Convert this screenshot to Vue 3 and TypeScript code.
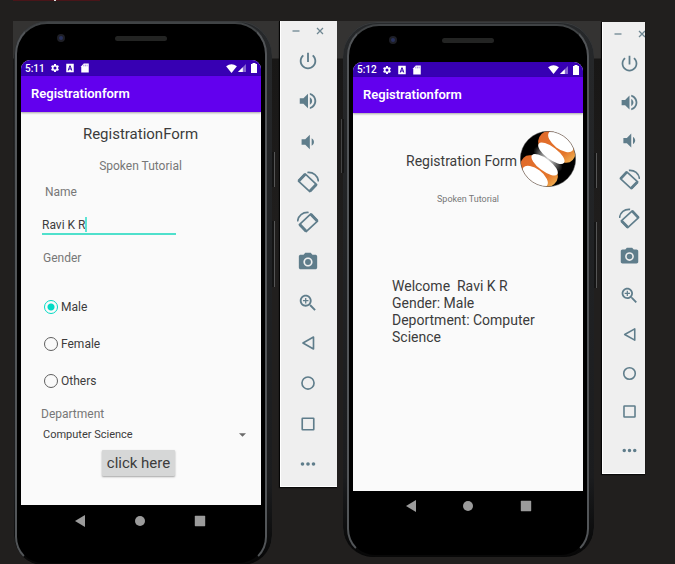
<script setup lang="ts">
import { ref } from 'vue'

interface Tool {
  label: string
  fill?: string
  ends?: string
  line?: string
  flip?: boolean
}

const rotateEnds = 'M1.9 11 8.9 3.6M14 22 21 14.8'
const rotateLine = 'M1.6 11 8.9 3.2 21.4 14.8 14 22.4ZM11.3 1.6C17.8 1 22.8 5.2 23.4 11.4'

const tools: Tool[] = [
  { label: 'Power', fill: 'M13 3h-2v10h2V3zm4.83 2.17l-1.42 1.42C17.99 7.86 19 9.81 19 12c0 3.87-3.13 7-7 7s-7-3.13-7-7c0-2.19 1.01-4.14 2.58-5.42L6.17 5.17C4.23 6.82 3 9.26 3 12c0 4.97 4.03 9 9 9s9-4.03 9-9c0-2.74-1.23-5.18-3.17-6.83z' },
  { label: 'Volume up', fill: 'M3 9v6h4l5 5V4L7 9H3zm13.5 3c0-1.77-1.02-3.29-2.5-4.03v8.05c1.48-.73 2.5-2.25 2.5-4.02zM14 3.23v2.06c2.89.86 5 3.54 5 6.71s-2.11 5.85-5 6.71v2.06c4.01-.91 7-4.49 7-8.77s-2.99-7.86-7-8.77z' },
  { label: 'Volume down', fill: 'M18.5 12c0-1.77-1.02-3.29-2.5-4.03v8.05c1.48-.73 2.5-2.25 2.5-4.02zM5 9v6h4l5 5V4L9 9H5z' },
  { label: 'Rotate left', ends: rotateEnds, line: rotateLine },
  { label: 'Rotate right', ends: rotateEnds, line: rotateLine, flip: true },
  { label: 'Take screenshot', fill: 'M12 8.8a3.2 3.2 0 1 0 0 6.4 3.2 3.2 0 0 0 0-6.4zM9 2L7.17 4H4c-1.1 0-2 .9-2 2v12c0 1.1.9 2 2 2h16c1.1 0 2-.9 2-2V6c0-1.1-.9-2-2-2h-3.17L15 2H9zm3 15c-2.76 0-5-2.24-5-5s2.24-5 5-5 5 2.24 5 5-2.24 5-5 5z' },
  { label: 'Zoom', fill: 'M15.5 14h-.79l-.28-.27C15.41 12.59 16 11.11 16 9.5 16 5.91 13.09 3 9.5 3S3 5.91 3 9.5 5.91 16 9.5 16c1.61 0 3.09-.59 4.23-1.57l.27.28v.79l5 4.99L20.49 19l-4.99-5zm-6 0C7.01 14 5 11.99 5 9.5S7.01 5 9.5 5 14 7.01 14 9.5 11.99 14 9.5 14zM10.2 6.5H8.8v2.3H6.5v1.4h2.3v2.3h1.4v-2.3h2.3V8.8h-2.3z' },
  { label: 'Back', line: 'M18 5.5V18.5L6.5 12Z' },
  { label: 'Home', line: 'M12 5.4a6.6 6.6 0 1 0 0 13.2 6.6 6.6 0 0 0 0-13.2Z' },
  { label: 'Overview', line: 'M6.2 5.7H17.8Q18.3 5.7 18.3 6.2V17.8Q18.3 18.3 17.8 18.3H6.2Q5.7 18.3 5.7 17.8V6.2Q5.7 5.7 6.2 5.7Z' },
  { label: 'More', fill: 'M6 10a2 2 0 1 0 0 4 2 2 0 0 0 0-4zm6 0a2 2 0 1 0 0 4 2 2 0 0 0 0-4zm6 0a2 2 0 1 0 0 4 2 2 0 0 0 0-4z' },
]

const gear = 'M19.14 12.94c.04-.3.06-.61.06-.94 0-.32-.02-.64-.07-.94l2.03-1.58c.18-.14.23-.41.12-.61l-1.92-3.32c-.12-.22-.37-.29-.59-.22l-2.39.96c-.5-.38-1.03-.7-1.62-.94l-.36-2.54c-.04-.24-.24-.41-.48-.41h-3.84c-.24 0-.43.17-.47.41l-.36 2.54c-.59.24-1.13.57-1.62.94l-2.39-.96c-.22-.08-.47 0-.59.22L2.74 8.87c-.12.21-.08.47.12.61l2.03 1.58c-.05.3-.09.63-.09.94s.02.64.07.94l-2.03 1.58c-.18.14-.23.41-.12.61l1.92 3.32c.12.22.37.29.59.22l2.39-.96c.5.38 1.03.7 1.62.94l.36 2.54c.05.24.24.41.48.41h3.84c.24 0 .44-.17.47-.41l.36-2.54c.59-.24 1.13-.56 1.62-.94l2.39.96c.22.08.47 0 .59-.22l1.92-3.32c.12-.22.07-.47-.12-.61l-2.01-1.58zM12 15.6A3.6 3.6 0 1 1 12 8.4a3.6 3.6 0 0 1 0 7.2z'

const devices = [
  { id: 'form', time: '5:11' },
  { id: 'result', time: '5:12' },
]

const name = ref('Ravi K R')
const genders = ['Male', 'Female', 'Others']
const gender = ref('Male')
const departments = ['Computer Science', 'Electronics', 'Mechanical']
const department = ref('Computer Science')
</script>

<template>
  <main class="desktop">
    <div class="typo"><i></i></div>
    <template v-for="device in devices" :key="device.id">
      <section class="stage" :class="device.id">
        <div class="phone">
          <span class="key key-power"></span>
          <span class="key key-volume"></span>
          <span v-if="device.id === 'result'" class="key key-side"></span>
          <div class="bezel">
            <div class="ear"><span class="camera"></span><span class="speaker"></span></div>
            <div class="screen">
              <div class="status">
                <span class="time">{{ device.time }}</span>
                <svg class="glyph" viewBox="0 0 24 24"><path :d="gear" /></svg>
                <svg class="glyph" viewBox="0 0 24 24"><path fill-rule="evenodd" d="M3 2H21V22H3ZM10.6 6 6.5 18H9L9.8 15.4H14.2L15 18H17.5L13.4 6ZM12 9 13.4 13.2H10.6Z" /></svg>
                <svg class="glyph" viewBox="0 0 24 24"><path d="M9 1H21V23H3V8Z" /><path class="notch" d="M9 4V8M13 4V8M17 4V8" /></svg>
                <svg class="glyph wifi" viewBox="0 0 24 20"><path d="M12 20 0 5Q12-4 24 5Z" /></svg>
                <svg class="glyph signal" viewBox="0 0 20 20"><path class="faint" d="M20 0V20H0Z" /><path d="M12 8V20H0Z" /></svg>
                <svg class="glyph battery" viewBox="0 0 12 20"><path d="M3 0H9V2H12V20H0V2H3Z" /></svg>
              </div>
              <header class="appbar">Registrationform</header>

              <form v-if="device.id === 'form'" class="content" @submit.prevent>
                <h1>RegistrationForm</h1>
                <p class="subtitle">Spoken Tutorial</p>
                <label class="caption caption-name" for="name">Name</label>
                <div class="field">
                  <input id="name" v-model="name" type="text" autocomplete="off" spellcheck="false" />
                  <span class="caret"></span>
                </div>
                <span id="gender" class="caption caption-gender">Gender</span>
                <div class="options" role="radiogroup" aria-labelledby="gender">
                  <label v-for="g in genders" :key="g" class="option">
                    <input v-model="gender" type="radio" name="gender" :value="g" />
                    <span>{{ g }}</span>
                  </label>
                </div>
                <label class="caption caption-department" for="department">Department</label>
                <div class="picker">
                  <select id="department" v-model="department">
                    <option v-for="d in departments" :key="d">{{ d }}</option>
                  </select>
                  <svg viewBox="0 0 8 4"><path d="M0 0H8L4 4Z" /></svg>
                </div>
                <button class="submit" type="submit">click here</button>
              </form>

              <div v-else class="content">
                <div class="headline">
                  <h1>Registration Form</h1>
                  <svg class="logo" viewBox="0 0 166 166">
                    <defs>
                      <clipPath id="disc"><circle cx="83" cy="83" r="82" /></clipPath>
                      <linearGradient id="flame" x1="0" y1="0" x2="1" y2="1">
                        <stop offset="0" stop-color="#e0682a" />
                        <stop offset="0.7" stop-color="#e4762c" />
                        <stop offset="1" stop-color="#f3c25c" />
                      </linearGradient>
                      <radialGradient id="shine">
                        <stop offset="0" stop-color="#d8d8d8" />
                        <stop offset="0.5" stop-color="#777" />
                        <stop offset="1" stop-color="#000" />
                      </radialGradient>
                    </defs>
                    <g clip-path="url(#disc)">
                      <rect width="166" height="166" fill="#000" />
                      <ellipse cx="83" cy="83" rx="52" ry="26" transform="rotate(40 83 83)" fill="url(#shine)" />
                      <path d="M55 42Q48 16 76 0H166V66Q158 98 132 94Z" fill="url(#flame)" />
                      <path d="M111 124Q118 150 90 166H0V100Q8 68 34 72Z" fill="url(#flame)" />
                      <g fill="#fff">
                        <ellipse cx="121" cy="31" rx="44" ry="22" transform="rotate(37 121 31)" />
                        <ellipse cx="93" cy="66" rx="47" ry="18" transform="rotate(37 93 66)" />
                        <ellipse cx="73" cy="100" rx="47" ry="18" transform="rotate(37 73 100)" />
                        <ellipse cx="45" cy="135" rx="44" ry="22" transform="rotate(37 45 135)" />
                      </g>
                    </g>
                    <circle cx="83" cy="83" r="82" fill="none" stroke="#555" stroke-width="1.5" />
                  </svg>
                </div>
                <p class="subtitle">Spoken Tutorial</p>
                <p class="summary">Welcome&nbsp; {{ name }}<br />Gender: {{ gender }}<br />Deportment: {{ department }}</p>
              </div>
            </div>
            <nav class="softkeys">
              <button type="button" aria-label="Back"><svg viewBox="0 0 12 12"><path d="M11 0V12L1 6Z" /></svg></button>
              <button type="button" aria-label="Home"><svg viewBox="0 0 12 12"><circle cx="6" cy="6" r="5" /></svg></button>
              <button type="button" aria-label="Overview"><svg viewBox="0 0 12 12"><rect x="0.8" y="0.8" width="10.4" height="10.4" rx="0.6" /></svg></button>
            </nav>
          </div>
        </div>
      </section>

      <aside class="toolbar" :class="device.id">
        <div class="window-keys">
          <button type="button" aria-label="Minimise"><svg viewBox="0 0 8 8"><path d="M0.5 4H7.5" /></svg></button>
          <button type="button" aria-label="Close"><svg viewBox="0 0 8 8"><path d="M1 1 7 7M7 1 1 7" /></svg></button>
        </div>
        <div class="tools">
          <button v-for="tool in tools" :key="tool.label" type="button" :aria-label="tool.label">
            <svg viewBox="0 0 24 24" :class="{ flip: tool.flip }">
              <path v-if="tool.fill" :d="tool.fill" class="solid" />
              <path v-if="tool.line" :d="tool.line" class="line" />
              <path v-if="tool.ends" :d="tool.ends" class="ends" />
            </svg>
          </button>
        </div>
      </aside>
    </template>
  </main>
</template>

<style>
body {
  margin: 0;
  background: #211f1e;
}
</style>

<style scoped>
* {
  box-sizing: border-box;
}

.desktop {
  position: relative;
  display: grid;
  grid-template-columns: minmax(0, 266fr) 58px minmax(0, 264fr) 44px;
  align-items: start;
  min-height: 100vh;
  padding: 21px 30px 0 13px;
  background: #211f1e;
  border-bottom: 1px solid #0c0509;
  overflow: hidden;
  font-family: Roboto, 'Liberation Sans', sans-serif;
  color: #3c3c3c;
}

.typo {
  position: absolute;
  top: 0;
  left: 13px;
  width: 87px;
  height: 1px;
  background: #4a1519;
}

.typo i {
  display: block;
  width: 2px;
  height: 1px;
  margin-left: 41px;
  background: #ddd;
}

button {
  padding: 0;
  border: 0;
  background: none;
  font: inherit;
  color: inherit;
}

h1,
p {
  margin: 0;
  font-weight: 400;
}

.stage {
  background: linear-gradient(#343332 0, #343332 37px, #181716 38px, #211f1e 240px);
}

.stage.form {
  padding: 0 7px 0 1px;
}

.stage.result {
  padding: 1px 7px 0 6px;
}

.phone {
  position: relative;
  border-radius: 34px 34px 30px 30px;
  background: linear-gradient(#26282a, #1b1c1e 85%, #060606);
  box-shadow: inset 0 1px #3a3c3e;
}

.form .phone {
  padding: 1px 5px 0 1px;
}

.result .phone {
  padding: 2px 5px 0 4px;
}

.bezel {
  padding: 0 4px;
  border: 2px solid #525558;
  border-top-color: #404345;
  border-bottom-color: #080808;
  border-radius: 32px 32px 28px 28px;
  background: #000;
}

.key {
  position: absolute;
  right: -3px;
  width: 3px;
  background: #151515;
  border-right: 1px solid #555;
}

.key-power {
  top: 131px;
  height: 35px;
}

.key-volume {
  top: 200px;
  height: 66px;
}

.key-side {
  top: 97px;
  right: auto;
  left: -2px;
  height: 54px;
  border-right: 0;
  border-left: 1px solid #444;
}

.ear {
  position: relative;
  display: flex;
  justify-content: center;
  align-items: center;
  height: 36px;
  padding-bottom: 7px;
}

.speaker {
  width: 52px;
  height: 5px;
  border-radius: 3px;
  background: #232423;
}

.camera {
  position: absolute;
  left: 36px;
  top: 10px;
  width: 8px;
  height: 8px;
  border: 2px solid #1e1f26;
  border-radius: 50%;
  background: #27305c;
}

.screen {
  overflow: hidden;
  border-radius: 9px 9px 0 0;
  background: #fafafa;
}

.status {
  display: flex;
  align-items: center;
  height: 16px;
  padding: 0 4px;
  background: #3700b3;
  color: #fff;
  font-size: 10px;
  font-weight: 500;
}

.result .status {
  height: 15px;
}

.time {
  width: 25px;
}

.glyph {
  width: 10px;
  height: 10px;
  margin-right: 5px;
  fill: #fff;
}

.glyph .faint {
  opacity: 0.4;
}

.glyph .notch {
  stroke: #3700b3;
  stroke-width: 1;
}

.wifi {
  width: 11px;
  height: 9px;
  margin: 0 1px 0 auto;
}

.signal {
  width: 8px;
  height: 8px;
}

.battery {
  width: 6px;
  margin: 0;
}

.appbar {
  position: relative;
  padding: 0 10px;
  background: #6200ee;
  box-shadow: 0 1px 2px rgba(0, 0, 0, 0.35);
  color: #fff;
  font-size: 13px;
  font-weight: 600;
  line-height: 36px;
}

.content {
  display: flex;
  flex-direction: column;
}

.form .content {
  padding: 12px 13px 29px 20px;
}

.result .content {
  padding: 18px 7px 145px;
}

h1 {
  font-size: 15px;
  line-height: 20px;
}

.form h1,
.form .subtitle {
  padding-right: 8px;
  text-align: center;
}

.subtitle,
.caption {
  color: #777;
  font-size: 12px;
  line-height: 16px;
}

.form .subtitle {
  margin-top: 14px;
}

.caption-name {
  margin: 10px 0 17px 4px;
}

.caption-gender {
  margin: 15px 0 33px 2px;
}

.caption-department {
  margin: 17px 0 5px;
}

.field {
  position: relative;
  width: 134px;
  margin-left: 1px;
}

.field input {
  display: block;
  width: 100%;
  height: 18px;
  padding: 0;
  border: 0;
  border-bottom: 2px solid #4fe0cc;
  outline: 0;
  background: none;
  color: #3c3c3c;
  font: 12px/16px Roboto, 'Liberation Sans', sans-serif;
}

.caret {
  position: absolute;
  top: 0;
  left: 43px;
  width: 2px;
  height: 15px;
  background: #5fe4d5;
}

.options {
  display: grid;
  gap: 21px;
  justify-items: start;
  margin-left: 3px;
}

.option {
  display: flex;
  align-items: center;
  gap: 3px;
  height: 16px;
  font-size: 12px;
}

.option input {
  appearance: none;
  width: 14px;
  height: 14px;
  margin: 0;
  border: 1px solid #5f5f5f;
  border-radius: 50%;
}

.option input:checked {
  border-color: #03dac5;
  background: radial-gradient(circle, #03dac5 3px, transparent 4px);
}

.picker {
  display: grid;
  grid-template-columns: 1fr 8px;
  align-items: center;
  padding: 0 1px 0 2px;
}

.picker select {
  grid-area: 1 / 1 / 2 / 3;
  appearance: none;
  height: 16px;
  padding: 0;
  border: 0;
  background: none;
  color: #3c3c3c;
  font: 11px/16px Roboto, 'Liberation Sans', sans-serif;
}

.picker svg {
  grid-area: 1 / 2;
  width: 7px;
  height: 4px;
  fill: #6a6a6a;
  pointer-events: none;
}

.submit {
  align-self: center;
  height: 26px;
  margin: 7px 12px 0 0;
  padding: 0 5px;
  border-radius: 1px;
  background: #d6d7d7;
  box-shadow: 0 1px 2px rgba(0, 0, 0, 0.35);
  font-size: 15px;
}

.headline {
  display: flex;
  align-items: center;
  justify-content: flex-end;
  gap: 3px;
}

.headline h1 {
  padding-top: 4px;
  font-size: 14px;
  white-space: nowrap;
}

.logo {
  width: 56px;
  height: 56px;
}

.result .subtitle {
  margin-top: 4px;
  font-size: 9px;
  text-align: center;
}

.summary {
  margin: 71px 28px 0 32px;
  font-size: 14px;
  line-height: 17px;
}

.softkeys {
  display: flex;
  justify-content: space-evenly;
  padding: 10px 7px 36px 5px;
}

.result .softkeys {
  padding: 9px 6px 43px;
}

.softkeys button {
  display: flex;
}

.softkeys svg {
  width: 12px;
  height: 12px;
  fill: #9b9b9b;
}

.toolbar {
  display: flex;
  flex-direction: column;
  overflow: hidden;
  border-left: 1px solid #050505;
  background: #efefef;
  box-shadow: inset 1px -1px #fff, 0 1px 1px #0a0a0a;
}

.toolbar.form {
  padding: 0 2px 3px 0;
}

.toolbar.result {
  margin-top: 1px;
  padding-bottom: 4px;
}

.window-keys {
  display: flex;
  gap: 16px;
  height: 20px;
  padding-left: 12px;
  align-items: center;
}

.result .window-keys {
  height: 22px;
  padding: 2px 0 0 12px;
}

.window-keys button {
  display: flex;
  flex: none;
}

.window-keys svg {
  width: 8px;
  height: 8px;
  fill: none;
  stroke: #6f8792;
  stroke-width: 1.3;
}

.tools {
  display: grid;
  grid-auto-rows: 1fr;
  height: 443px;
}

.result .tools {
  width: 54px;
  height: 426px;
}

.tools button {
  display: flex;
  align-items: center;
  justify-content: center;
}

.tools svg {
  width: 22px;
  height: 22px;
}

.result .tools svg {
  width: 21px;
  height: 21px;
}

.tools .flip {
  transform: scaleX(-1);
}

.solid {
  fill: #5f7d8b;
}

.line,
.ends {
  fill: none;
  stroke: #5f7d8b;
  stroke-width: 1.8;
  stroke-linejoin: round;
}

.ends {
  stroke-width: 3.2;
}
</style>
